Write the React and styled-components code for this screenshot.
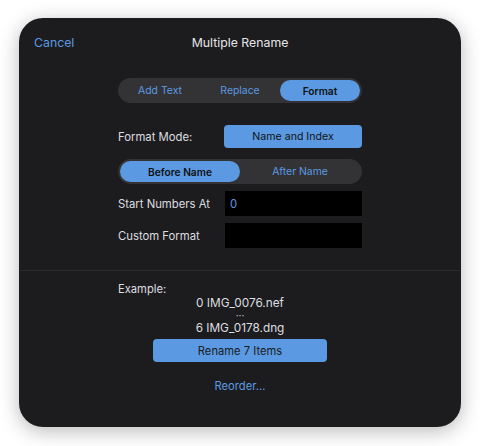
import React, { useState } from 'react';
import styled, { createGlobalStyle } from 'styled-components';

const GlobalStyle = createGlobalStyle`
  html, body {
    margin: 0;
    padding: 0;
    background: #ffffff;
    font-family: Inter, "Noto Sans", "Liberation Sans", sans-serif;
  }
`;

const BLUE = '#5b9ae2';

const Page = styled.div`
  width: 480px;
  height: 446px;
  padding: 18px 19px 0;
  box-sizing: border-box;
`;

const Panel = styled.div`
  width: 442px;
  height: 409px;
  background: #1c1c1e;
  border-radius: 24px;
  box-shadow: 0 4px 20px rgba(0, 0, 0, 0.28);
  display: flex;
  flex-direction: column;
  align-items: center;
  overflow: hidden;
`;

const Header = styled.div`
  position: relative;
  width: 100%;
  height: 48px;
  display: flex;
  align-items: center;
  justify-content: center;
`;

const Cancel = styled.a`
  position: absolute;
  left: 15px;
  top: 50%;
  transform: translateY(-50%);
  color: ${BLUE};
  font-size: 12.3px;
  cursor: pointer;
`;

const Title = styled.div`
  color: #e6e6e8;
  font-size: 12.3px;
`;

const Column = styled.div`
  width: 244px;
  display: flex;
  flex-direction: column;
`;

const Segmented = styled.div`
  display: flex;
  height: 25px;
  padding: 2px;
  box-sizing: border-box;
  background: #333335;
  border-radius: 13px;
  margin-top: ${(p) => p.$top}px;
`;

const Segment = styled.div`
  flex: 1;
  display: flex;
  align-items: center;
  justify-content: center;
  border-radius: 11px;
  font-size: ${(p) => (p.$active ? 10.2 : 10.4)}px;
  font-weight: ${(p) => (p.$active ? 600 : 400)};
  color: ${(p) => (p.$active ? '#111' : BLUE)};
  background: ${(p) => (p.$active ? BLUE : 'transparent')};
  cursor: pointer;
`;

const Row = styled.div`
  display: flex;
  align-items: center;
  justify-content: space-between;
  height: ${(p) => p.$h || 25}px;
  margin-top: ${(p) => p.$top}px;
`;

const Label = styled.span`
  color: #dedee0;
  font-size: 11.3px;
`;

const ModeButton = styled.div`
  width: 138px;
  height: 23px;
  border-radius: 4px;
  background: ${BLUE};
  color: #111;
  font-size: 10.6px;
  display: flex;
  align-items: center;
  justify-content: center;
`;

const Field = styled.input`
  width: 137px;
  height: 25px;
  box-sizing: border-box;
  background: #000;
  border: none;
  outline: none;
  padding: 0 5px;
  color: ${BLUE};
  font-family: inherit;
  font-size: 11.3px;
`;

const Divider = styled.div`
  width: 100%;
  height: 1px;
  background: #2b2b2d;
  margin-top: 22px;
`;

const Example = styled.div`
  width: 244px;
  display: flex;
  flex-direction: column;
  align-items: center;
  color: #dedee0;
  font-size: 11.8px;
`;

const ExampleLabel = styled.div`
  align-self: flex-start;
  font-size: 11.2px;
  line-height: 15px;
  margin-top: 11px;
`;

const ExampleLine = styled.div`
  line-height: ${(p) => p.$lh}px;
  height: ${(p) => p.$lh}px;
`;

const Ellipsis = styled.div`
  font-size: 10px;
  line-height: 11px;
  height: 11px;
  color: #c4c4c7;
`;

const RenameButton = styled.button`
  width: 174px;
  height: 23px;
  margin-top: 4px;
  border: none;
  border-radius: 4px;
  background: ${BLUE};
  color: #1a1a1a;
  font-family: inherit;
  font-size: 11.2px;
  cursor: pointer;
`;

const Reorder = styled.a`
  margin-top: 17px;
  line-height: 14px;
  color: ${BLUE};
  font-size: 11.2px;
  cursor: pointer;
`;

export default function App() {
  const [tab, setTab] = useState('Format');
  const [position, setPosition] = useState('before');
  const [start, setStart] = useState('0');
  const [custom, setCustom] = useState('');

  return (
    <>
      <GlobalStyle />
      <Page>
        <Panel>
          <Header>
            <Cancel>Cancel</Cancel>
            <Title>Multiple Rename</Title>
          </Header>
          <Column>
            <Segmented $top={12}>
              {['Add Text', 'Replace', 'Format'].map((t) => (
                <Segment key={t} $active={tab === t} onClick={() => setTab(t)}>
                  {t}
                </Segment>
              ))}
            </Segmented>
            <Row $top={22} $h={23}>
              <Label>Format Mode:</Label>
              <ModeButton>Name and Index</ModeButton>
            </Row>
            <Segmented $top={11}>
              <Segment $active={position === 'before'} onClick={() => setPosition('before')}>
                Before Name
              </Segment>
              <Segment $active={position === 'after'} onClick={() => setPosition('after')}>
                After Name
              </Segment>
            </Segmented>
            <Row $top={7}>
              <Label>Start Numbers At</Label>
              <Field value={start} onChange={(e) => setStart(e.target.value)} />
            </Row>
            <Row $top={7}>
              <Label>Custom Format</Label>
              <Field value={custom} onChange={(e) => setCustom(e.target.value)} />
            </Row>
          </Column>
          <Divider />
          <Example>
            <ExampleLabel>Example:</ExampleLabel>
            <ExampleLine $lh={13}>0 IMG_0076.nef</ExampleLine>
            <Ellipsis>···</Ellipsis>
            <ExampleLine $lh={14}>6 IMG_0178.dng</ExampleLine>
            <RenameButton>Rename 7 Items</RenameButton>
            <Reorder>Reorder...</Reorder>
          </Example>
        </Panel>
      </Page>
    </>
  );
}
